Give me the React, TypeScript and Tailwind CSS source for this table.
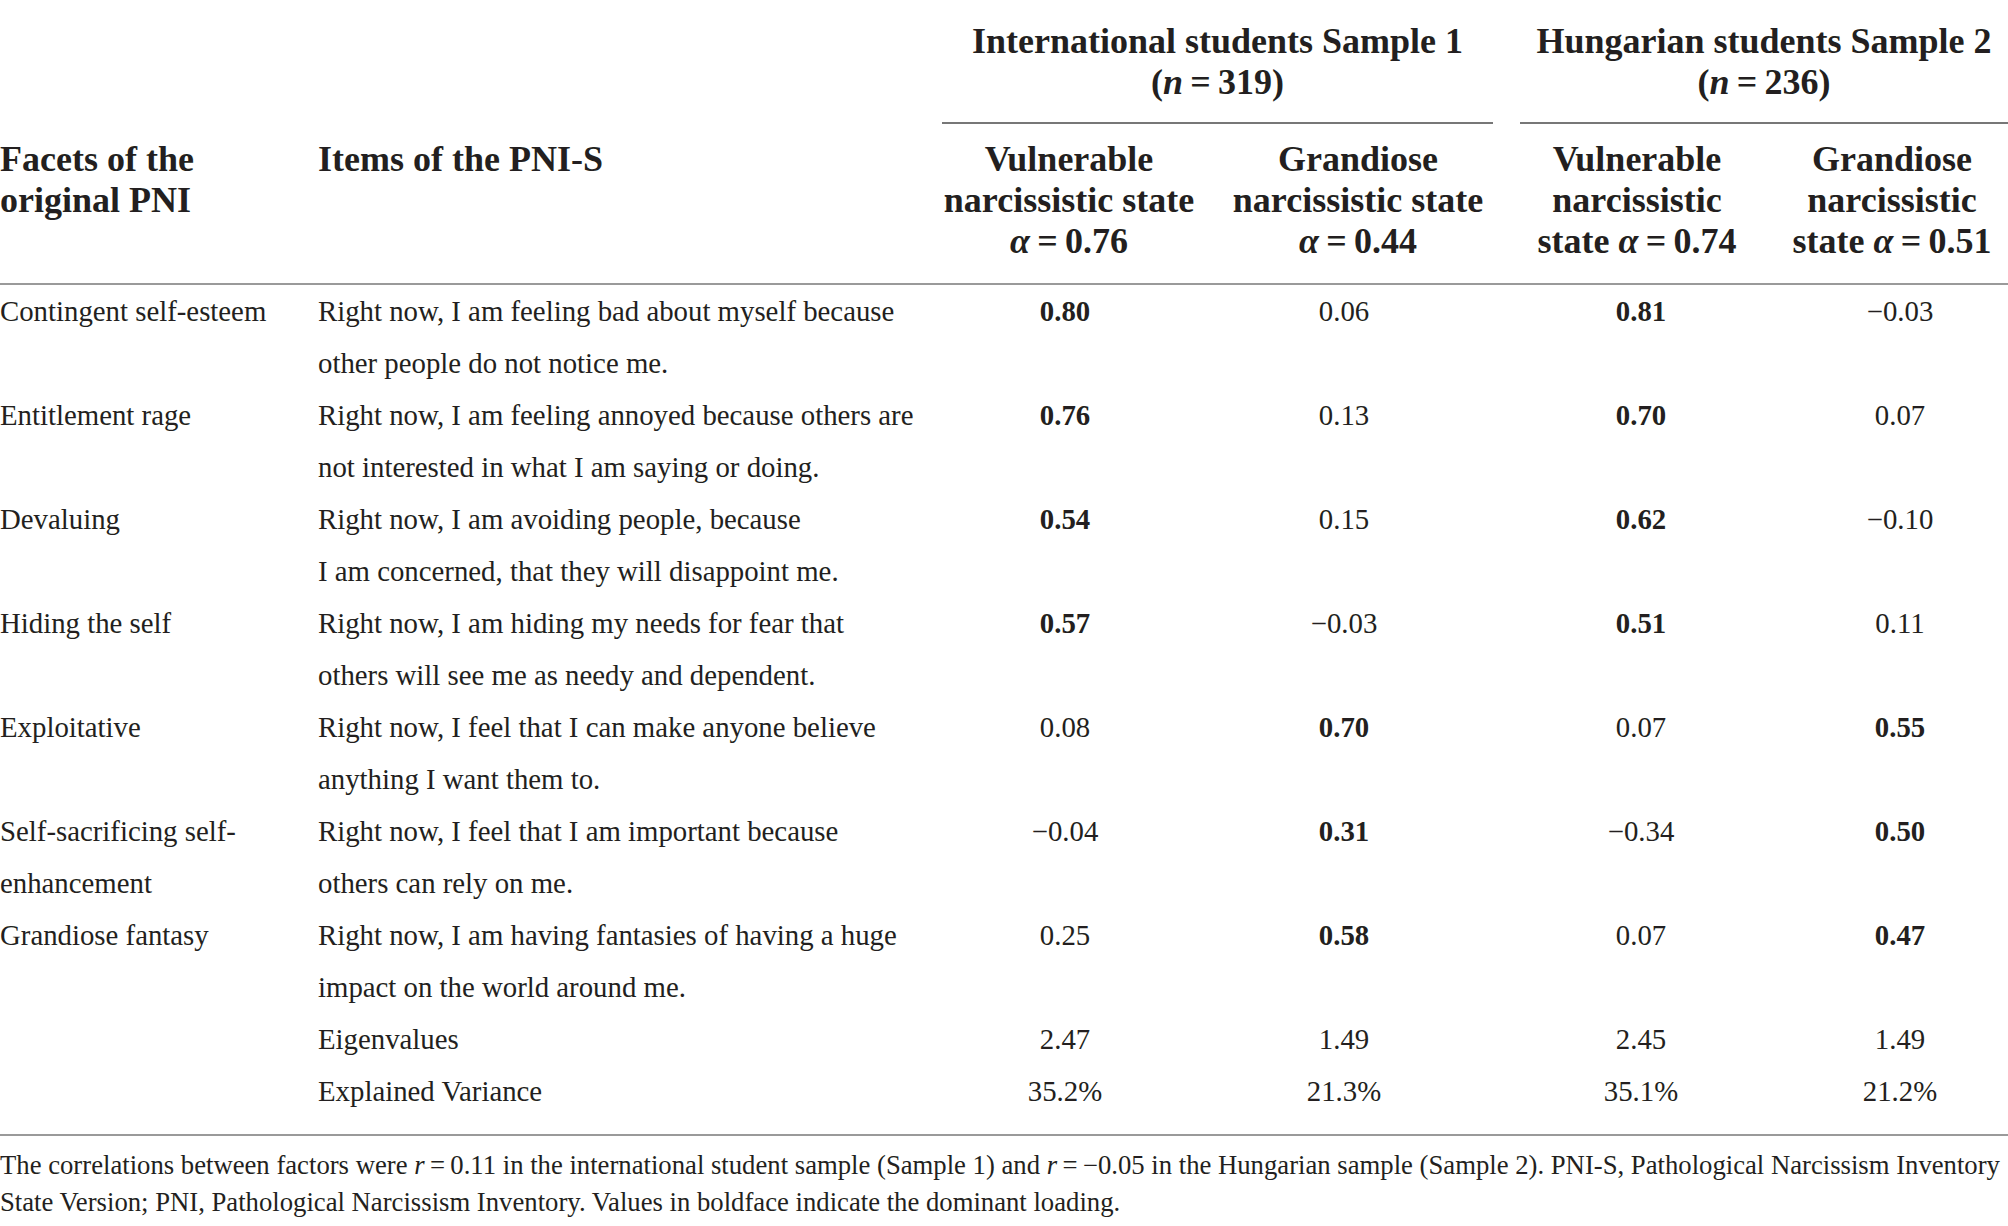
import React from 'react';

type Val = [string, boolean];

const rows: { facet: string[]; item: string[]; vals: Val[] }[] = [
  {
    facet: ['Contingent self-esteem'],
    item: ['Right now, I am feeling bad about myself because', 'other people do not notice me.'],
    vals: [['0.80', true], ['0.06', false], ['0.81', true], ['\u22120.03', false]],
  },
  {
    facet: ['Entitlement rage'],
    item: ['Right now, I am feeling annoyed because others are', 'not interested in what I am saying or doing.'],
    vals: [['0.76', true], ['0.13', false], ['0.70', true], ['0.07', false]],
  },
  {
    facet: ['Devaluing'],
    item: ['Right now, I am avoiding people, because', 'I am concerned, that they will disappoint me.'],
    vals: [['0.54', true], ['0.15', false], ['0.62', true], ['\u22120.10', false]],
  },
  {
    facet: ['Hiding the self'],
    item: ['Right now, I am hiding my needs for fear that', 'others will see me as needy and dependent.'],
    vals: [['0.57', true], ['\u22120.03', false], ['0.51', true], ['0.11', false]],
  },
  {
    facet: ['Exploitative'],
    item: ['Right now, I feel that I can make anyone believe', 'anything I want them to.'],
    vals: [['0.08', false], ['0.70', true], ['0.07', false], ['0.55', true]],
  },
  {
    facet: ['Self-sacrificing self-', 'enhancement'],
    item: ['Right now, I feel that I am important because', 'others can rely on me.'],
    vals: [['\u22120.04', false], ['0.31', true], ['\u22120.34', false], ['0.50', true]],
  },
  {
    facet: ['Grandiose fantasy'],
    item: ['Right now, I am having fantasies of having a huge', 'impact on the world around me.'],
    vals: [['0.25', false], ['0.58', true], ['0.07', false], ['0.47', true]],
  },
];

const summary: { label: string; vals: string[] }[] = [
  { label: 'Eigenvalues', vals: ['2.47', '1.49', '2.45', '1.49'] },
  { label: 'Explained Variance', vals: ['35.2%', '21.3%', '35.1%', '21.2%'] },
];

const COLS = 'grid grid-cols-[318px_624px_254px_324px_234px_254px]';
// small nudges so the numbers sit where the reference puts them
const valPad = ['pr-[8px]', 'pr-[28px]', 'pl-[8px]', 'pl-[38px]'];

function Lines({ lines }: { lines: string[] }) {
  return (
    <>
      {lines.map((l, i) => (
        <div key={i} className="whitespace-nowrap">
          {l}
        </div>
      ))}
    </>
  );
}

export default function App() {
  return (
    <div className="w-[2008px] h-[1226px] bg-white overflow-hidden font-['Liberation_Serif','Times_New_Roman',serif] text-[#231f20]">
      {/* header */}
      <div className="border-b-2 border-[#9a9a9a]">
        <div className={`${COLS} pt-[21px] text-[36px] leading-[41px] font-bold`}>
          <div className="col-start-3 col-span-2 mr-[27px] border-b-2 border-[#777] pb-[19px] text-center whitespace-nowrap">
            <div>International students Sample 1</div>
            <div>
              (<i>n</i>{'\u2009=\u2009'}319)
            </div>
          </div>
          <div className="col-span-2 border-b-2 border-[#777] pb-[19px] text-center whitespace-nowrap">
            <div>Hungarian students Sample 2</div>
            <div>
              (<i>n</i>{'\u2009=\u2009'}236)
            </div>
          </div>
        </div>
        <div className={`${COLS} pt-[15px] pb-[21px] text-[36px] leading-[41px] font-bold`}>
          <div className="whitespace-nowrap">
            <div>Facets of the</div>
            <div>original PNI</div>
          </div>
          <div>Items of the PNI-S</div>
          <div className="text-center whitespace-nowrap">
            <div>Vulnerable</div>
            <div>narcissistic state</div>
            <div>
              <i>α</i>{'\u2009=\u2009'}0.76
            </div>
          </div>
          <div className="text-center whitespace-nowrap">
            <div>Grandiose</div>
            <div>narcissistic state</div>
            <div>
              <i>α</i>{'\u2009=\u2009'}0.44
            </div>
          </div>
          <div className="text-center whitespace-nowrap">
            <div>Vulnerable</div>
            <div>narcissistic</div>
            <div>
              state <i>α</i>{'\u2009=\u2009'}0.74
            </div>
          </div>
          <div className="text-center whitespace-nowrap pl-[22px]">
            <div>Grandiose</div>
            <div>narcissistic</div>
            <div>
              state <i>α</i>{'\u2009=\u2009'}0.51
            </div>
          </div>
        </div>
      </div>

      {/* body */}
      <div className="border-b-2 border-[#9a9a9a] pb-[17px] text-[28.8px] leading-[52px]">
        {rows.map((r, i) => (
          <div key={i} className={COLS}>
            <div>
              <Lines lines={r.facet} />
            </div>
            <div>
              <Lines lines={r.item} />
            </div>
            {r.vals.map(([v, b], j) => (
              <div key={j} className={`text-center ${valPad[j]} ${b ? 'font-bold' : ''}`}>
                {v}
              </div>
            ))}
          </div>
        ))}
        {summary.map((s) => (
          <div key={s.label} className={COLS}>
            <div />
            <div>{s.label}</div>
            {s.vals.map((v, j) => (
              <div key={j} className={`text-center ${valPad[j]}`}>
                {v}
              </div>
            ))}
          </div>
        ))}
      </div>

      {/* note */}
      <div className="pt-[11px] text-[26.7px] leading-[37px] whitespace-nowrap">
        <div>
          The correlations between factors were <i>r</i>
          {'\u2009=\u2009'}0.11 in the international student sample (Sample 1) and <i>r</i>
          {'\u2009=\u2009\u2212'}0.05 in the Hungarian sample (Sample 2). PNI-S, Pathological Narcissism Inventory
        </div>
        <div>State Version; PNI, Pathological Narcissism Inventory. Values in boldface indicate the dominant loading.</div>
      </div>
    </div>
  );
}
